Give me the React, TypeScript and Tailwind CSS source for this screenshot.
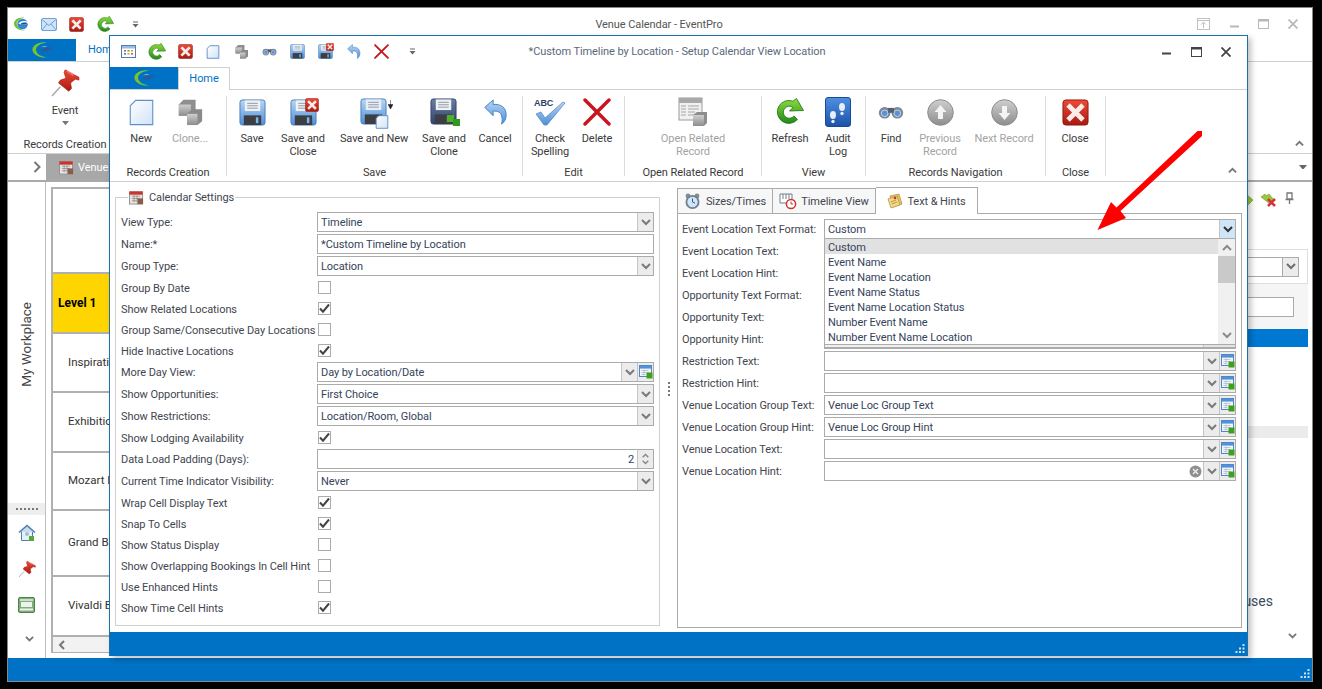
import React from "react";

const Defs = () => (
  <svg width="0" height="0" className="absolute">
    <defs>
      <linearGradient id="gRed" x1="0" y1="0" x2="0" y2="1"><stop offset="0" stopColor="#ee4a38" /><stop offset="1" stopColor="#a81a10" /></linearGradient>
      <linearGradient id="gBlue" x1="0" y1="0" x2="0" y2="1"><stop offset="0" stopColor="#b8d6f4" /><stop offset="1" stopColor="#4e8fd8" /></linearGradient>
      <linearGradient id="gDark" x1="0" y1="0" x2="0" y2="1"><stop offset="0" stopColor="#6c7ea0" /><stop offset="1" stopColor="#2f4470" /></linearGradient>
      <linearGradient id="gGreen" x1="0" y1="0" x2="0" y2="1"><stop offset="0" stopColor="#8fdc3c" /><stop offset="1" stopColor="#1f8a18" /></linearGradient>
      <linearGradient id="gDoc" x1="0" y1="0" x2="1" y2="1"><stop offset="0" stopColor="#ffffff" /><stop offset="1" stopColor="#cfe3f7" /></linearGradient>
      <linearGradient id="gGrey" x1="0" y1="0" x2="0" y2="1"><stop offset="0" stopColor="#cfcfcf" /><stop offset="1" stopColor="#8d8d8d" /></linearGradient>
      <linearGradient id="gBook" x1="0" y1="0" x2="0" y2="1"><stop offset="0" stopColor="#4f8fe0" /><stop offset="1" stopColor="#1b52a8" /></linearGradient>
    </defs>
  </svg>
);

const Logo = ({ w = 24 }: { w?: number }) => (
  <svg width={w} height={w * 0.78} viewBox="0 0 32 25">
    <path d="M22 2C11 0 1 6 2 13c1 7 11 11 20 10-7-1-14-4-15-10C6 8 13 3 22 2z" fill="#7cc22e" />
    <path d="M12 14c4-4 11-6 18-5-2 4-9 7-18 5z" fill="#2d5a9c" />
    <path d="M14 9c3-2 7-2 9-1-3 0-6 0-9 1z" fill="#e8f2fb" />
  </svg>
);
const SmallLogo = () => (
  <svg width="17" height="16" viewBox="0 0 32 30">
    <path d="M22 3C10 1 1 8 2 15c1 8 11 13 21 12-8-1-15-5-16-12C6 10 13 4 22 3z" fill="#6cc02a" />
    <circle cx="18" cy="15" r="10" fill="#1f7ad0" opacity="0.9" />
    <path d="M10 14c4-5 12-6 20-3-3 5-12 7-20 3z" fill="#ffffff" />
    <path d="M14 15c4-3 9-3 13-2-3 3-8 4-13 2z" fill="#1b4a94" />
  </svg>
);

const RedX = ({ s = 16 }: { s?: number }) => (
  <svg width={s} height={s} viewBox="0 0 28 28">
    <rect x="1" y="1" width="26" height="26" rx="3" fill="url(#gRed)" stroke="#8c1a12" />
    <path d="M8 8l12 12M20 8L8 20" stroke="#fbecea" strokeWidth="5" strokeLinecap="square" />
  </svg>
);
const Refresh = ({ s = 18 }: { s?: number }) => (
  <svg width={s} height={s} viewBox="0 0 28 28">
    <path d="M21.5 21.5A11.5 11.5 0 1 1 17 3.2L20.5 0.5 27.5 12.5 13.5 13 17 9.5A6 6 0 1 0 18 18z" fill="url(#gGreen)" stroke="#1d6f16" strokeWidth="0.8" strokeLinejoin="round" />
  </svg>
);
const Mail = () => (
  <svg width="16" height="13" viewBox="0 0 16 13">
    <rect x="0.5" y="0.5" width="15" height="12" rx="1" fill="#cfe4f8" stroke="#6fa1d6" />
    <path d="M1 1.5l7 6 7-6M1 12l5-6M15 12l-5-6" stroke="#6fa1d6" fill="none" />
  </svg>
);
const Doc = ({ s = 28 }: { s?: number }) => (
  <svg width={s} height={s} viewBox="0 0 28 30">
    <path d="M7.5 1.5H26.5V28.5H1.5V7.5z" fill="url(#gDoc)" stroke="#5f8fc8" strokeWidth={s < 20 ? 2 : 1.2} />
  </svg>
);
const Cubes = ({ s = 28 }: { s?: number }) => (
  <svg width={s} height={s} viewBox="0 0 28 30">
    <path d="M2 7l5-5h13v12l-5 5H2z" fill="#8f8f8f" />
    <path d="M2 7h13v12H2z" fill="url(#gGrey)" />
    <path d="M11 17l5-5h11v13l-5 4H11z" fill="#8a8a8a" />
    <path d="M11 17h11v12H11z" fill="url(#gGrey)" />
  </svg>
);
const Binoc = ({ s = 26 }: { s?: number }) => (
  <svg width={s} height={s * 0.6} viewBox="0 0 26 16">
    <circle cx="6.5" cy="9" r="6" fill="#7b8796" />
    <circle cx="19.5" cy="9" r="6" fill="#7b8796" />
    <circle cx="6.5" cy="9.5" r="3.4" fill="#5b92d6" stroke="#c4d6ee" />
    <circle cx="19.5" cy="9.5" r="3.4" fill="#5b92d6" stroke="#c4d6ee" />
    <rect x="10" y="4" width="6" height="5" fill="#56606c" />
  </svg>
);
const Floppy = ({ s = 28, dark = false, light = false }: { s?: number; dark?: boolean; light?: boolean }) => (
  <svg width={s} height={s} viewBox="0 0 28 28">
    <rect x="1" y="1" width="26" height="26" rx="2.5" fill={dark ? "url(#gDark)" : "url(#gBlue)"} stroke={dark ? "#2f4470" : "#4a7cb8"} />
    <rect x="6" y="1.5" width="16" height="11" fill={light ? "#e8eef6" : "#f0f1f3"} />
    <path d="M8.5 4.5h11M8.5 7h11M8.5 9.5h11" stroke="#8f98a3" />
    <rect x="5" y="17" width="18" height="10" fill="#3c3e44" />
    <rect x="17.5" y="19" width="2.6" height="6" fill="#7fb5e8" />
  </svg>
);
const Corner = ({ children, cls }: { children: React.ReactNode; cls: string }) => <span className={"absolute " + cls}>{children}</span>;
const FloppyX = ({ s = 28 }: { s?: number }) => (
  <span className="relative inline-block" style={{ width: s, height: s }}>
    <Floppy s={s} />
    <Corner cls="-right-[2px] -top-[1px] leading-none"><RedX s={Math.round(s * 0.5)} /></Corner>
  </span>
);
const Undo = ({ s = 26 }: { s?: number }) => (
  <svg width={s} height={s} viewBox="0 0 26 28">
    <path d="M2 9L11 1v5c8-1 14 3 14 11 0 5-2 8-5 10 1-3 1-6 0-9-1-4-4-5-9-5v5z" fill="url(#gBlue)" stroke="#3f7dc4" />
  </svg>
);
const BigX = ({ s = 28 }: { s?: number }) => (
  <svg width={s} height={s} viewBox="0 0 28 28">
    <path d="M2 2L26 26M26 2L2 26" stroke="#c8141c" strokeWidth="3.4" strokeLinecap="round" />
  </svg>
);
const Cubes3 = () => (
  <svg width="14" height="13" viewBox="0 0 14 13">
    <rect x="0" y="1" width="7" height="7" fill="#4fb02a" />
    <rect x="6" y="5" width="7" height="7" fill="#2f9a1c" />
  </svg>
);
const CheckAbc = () => (
  <svg width="32" height="32" viewBox="0 0 32 32">
    <text x="0" y="9.5" fontSize="9" fontWeight="700" fill="#2d3f66" fontFamily="'Liberation Sans',sans-serif">ABC</text>
    <path d="M2 18l5-2 4 6L29 6l2 1-18 22h-3z" fill="url(#gBlue)" stroke="#5d8dc4" strokeWidth="0.8" />
  </svg>
);
const RecordOpen = () => (
  <svg width="30" height="30" viewBox="0 0 30 30">
    <rect x="1" y="1" width="23" height="22" fill="#f1f1f1" stroke="#9a9a9a" />
    <rect x="1" y="1" width="23" height="5" fill="#a9a9a9" />
    <path d="M3 9h5M3 12h5M3 15h5M3 18h5M10 9h11M10 12h11M10 15h7M10 18h7" stroke="#a5a5a5" />
    <path d="M15 18l4-3h10v11l-3 3H15z" fill="#8d8d8d" />
    <rect x="15" y="18" width="11" height="11" fill="url(#gGrey)" />
  </svg>
);
const Audit = () => (
  <svg width="26" height="30" viewBox="0 0 26 30">
    <rect x="0.5" y="0.5" width="25" height="29" rx="2.5" fill="url(#gBook)" stroke="#174a98" />
    <ellipse cx="8" cy="18" rx="3" ry="4" fill="#e6eef8" />
    <circle cx="8" cy="24.5" r="1.7" fill="#e6eef8" />
    <ellipse cx="17" cy="10" rx="3" ry="4" fill="#e6eef8" />
    <circle cx="17" cy="16.5" r="1.7" fill="#e6eef8" />
  </svg>
);
const CircleArrow = ({ up = false }: { up?: boolean }) => (
  <svg width="27" height="27" viewBox="0 0 27 27">
    <circle cx="13.5" cy="13.5" r="12.8" fill="url(#gGrey)" stroke="#8c8c8c" />
    <path d={up ? "M13.5 6l6 7h-3.5v7h-5v-7H7.5z" : "M13.5 21l6-7h-3.5V7h-5v7H7.5z"} fill="#f4f4f4" />
  </svg>
);
const Pin = ({ s = 32 }: { s?: number }) => (
  <svg width={s} height={s} viewBox="0 0 32 32">
    <path d="M11 20L2 30" stroke="#a8a8a8" strokeWidth="1.6" />
    <path d="M16 2l-1 3 2 6-6 2-2 3 11 9 3-3-1-6 5-4 4 1 0-3z" fill="url(#gRed)" stroke="#a5120e" strokeWidth="0.6" />
    <path d="M18 3l7 5" stroke="#f47c6c" strokeWidth="1.6" />
  </svg>
);
const Calendar = ({ s = 16 }: { s?: number }) => (
  <svg width={s} height={s} viewBox="0 0 16 16">
    <rect x="0.5" y="2" width="14" height="13" fill="#e8e6e2" stroke="#8f8f8f" />
    <rect x="0.5" y="1.5" width="14" height="3.5" fill="#c9352c" />
    <path d="M3 6.5h9M3 9h9M3 11.5h5M5.5 6v7M8.5 6v7" stroke="#8a8a8a" strokeWidth="0.8" />
    <rect x="9" y="9" width="6" height="6" fill="#8c5a48" />
  </svg>
);
const TableGrid = () => (
  <svg width="15" height="13" viewBox="0 0 15 13">
    <rect x="0.5" y="0.5" width="14" height="12" fill="#fff" stroke="#4f7fb8" />
    <rect x="1" y="1" width="13" height="2.5" fill="#9cbde0" />
    <rect x="3" y="5" width="2" height="1.6" fill="#d9534f" /><rect x="6.5" y="5" width="2" height="1.6" fill="#4caf50" /><rect x="10" y="5" width="2" height="1.6" fill="#e0a030" />
    <rect x="3" y="8" width="2" height="1.6" fill="#4f7fb8" /><rect x="6.5" y="8" width="2" height="1.6" fill="#e0a030" /><rect x="10" y="8" width="2" height="1.6" fill="#d9534f" />
  </svg>
);
const Clock = () => (
  <svg width="17" height="17" viewBox="0 0 17 17">
    <circle cx="4" cy="3" r="2.4" fill="#8a8a8a" /><circle cx="13" cy="3" r="2.4" fill="#8a8a8a" />
    <circle cx="8.5" cy="9" r="7" fill="#6f7f8f" />
    <circle cx="8.5" cy="9" r="5.2" fill="#cfe6fa" />
    <path d="M8.5 5.5V9l2.5 1.2" stroke="#3a5a80" fill="none" />
  </svg>
);
const TimelineIc = () => (
  <svg width="18" height="17" viewBox="0 0 18 17">
    <path d="M1 1h12v9H1z" fill="#fff" stroke="#6f7f8f" />
    <path d="M4 1v5M7 1v5M10 1v5" stroke="#6f7f8f" />
    <circle cx="12" cy="11" r="4.6" fill="#fff" stroke="#c8352c" strokeWidth="1.5" />
    <path d="M12 8.5V11h2" stroke="#c8352c" fill="none" />
  </svg>
);
const Note = () => (
  <svg width="16" height="16" viewBox="0 0 16 16">
    <path d="M3 3l9-2 3 10-9 3z" fill="#e8c468" stroke="#b08a35" strokeWidth="0.7" />
    <path d="M1 6l9-3 3 9-9 3z" fill="#f0d88a" stroke="#b08a35" strokeWidth="0.7" />
    <circle cx="8" cy="5" r="1.3" fill="#c8352c" />
    <path d="M4 9l5-2M5 11l5-2" stroke="#a67c2a" strokeWidth="0.7" />
  </svg>
);
const Lookup = () => (
  <svg width="14" height="14" viewBox="0 0 14 14">
    <rect x="0.5" y="0.5" width="12" height="11" fill="#f2f6fb" stroke="#4f88c8" />
    <rect x="1" y="1" width="11" height="2.6" fill="#4f93dc" />
    <path d="M2.5 5.5h7M2.5 7.5h7M2.5 9.5h4M5 4.5v6" stroke="#a9b6c4" strokeWidth="0.7" />
    <rect x="7.5" y="7.5" width="6" height="6" fill="#3fa01e" />
  </svg>
);
const Chev = ({ c = "#6e6e6e", up = false, w = 10 }: { c?: string; up?: boolean; w?: number }) => (
  <svg width={w} height={w * 0.7} viewBox="0 0 10 7">
    <path d={up ? "M1 6l4-4 4 4" : "M1 1l4 4 4-4"} stroke={c} strokeWidth="2" fill="none" />
  </svg>
);
const Tri = ({ c = "#777", w = 7 }: { c?: string; w?: number }) => (
  <svg width={w} height={w * 0.6} viewBox="0 0 10 6"><path d="M0 0h10L5 6z" fill={c} /></svg>
);
const QatMore = () => (
  <svg width="7" height="7" viewBox="0 0 7 7"><path d="M1 1h5" stroke="#666" /><path d="M0.5 3h6L3.5 6.5z" fill="#666" /></svg>
);
const Check = () => (
  <svg width="13" height="13" viewBox="0 0 13 13">
    <path d="M2 6.5l3 3.2L11 2.5" stroke="#444" strokeWidth="2" fill="none" />
  </svg>
);
const Win = ({ light = false }: { light?: boolean }) => {
  const c = light ? "#b9b9b9" : "#444";
  return (
    <>
      <svg width="9" height="9" viewBox="0 0 9 9"><path d="M0 6.5h9" stroke={c} strokeWidth="2" /></svg>
      <svg width="11" height="10" viewBox="0 0 11 10"><rect x="0.5" y="0.5" width="10" height="9" fill="none" stroke={c} /><path d="M0 1.5h11" stroke={c} strokeWidth="2" /></svg>
      <svg width="10" height="10" viewBox="0 0 10 10"><path d="M0.5 0.5l9 9M9.5 0.5l-9 9" stroke={c} strokeWidth="1.8" /></svg>
    </>
  );
};

const Btn = ({ w, icon, lines, dim = false }: { w: string; icon: React.ReactNode; lines: string[]; dim?: boolean }) => (
  <div className={"flex flex-col items-center shrink-0 " + w}>
    <div className="flex h-[32px] items-center justify-center">{icon}</div>
    <div className={"mt-[4px] text-center leading-[13px] whitespace-nowrap " + (dim ? "text-[#a3a3a3]" : "text-[#3a3a3a]")}>
      {lines.map((l) => <div key={l}>{l}</div>)}
    </div>
  </div>
);
const Group = ({ w, label, children }: { w: string; label: string; children: React.ReactNode }) => (
  <div className={"flex flex-col shrink-0 pt-[6px] " + w}>
    <div className="flex flex-1">{children}</div>
    <div className="h-[16px] text-center leading-[16px] text-[#3a3a3a] whitespace-nowrap">{label}</div>
  </div>
);
const Sep = () => <div className="h-[80px] w-px shrink-0 self-center bg-[#dcdcdc]" />;

const Field = ({ value = "", chev = true, lookup = false, right = false, clear = false, active = false }: { value?: string; chev?: boolean; lookup?: boolean; right?: boolean; clear?: boolean; active?: boolean }) => (
  <div className="flex h-[20px] w-full border border-[#ababab] bg-white text-[#34435a]">
    <div className={"flex-1 px-[3px] leading-[19px] whitespace-nowrap overflow-hidden " + (right ? "text-right" : "")}>{value}</div>
    {clear && (
      <div className="flex w-[16px] items-center justify-center">
        <svg width="13" height="13" viewBox="0 0 13 13"><circle cx="6.5" cy="6.5" r="6" fill="#8f8f8f" /><path d="M4 4l5 5M9 4l-5 5" stroke="#eee" strokeWidth="1.4" /></svg>
      </div>
    )}
    {chev && (
      <div className={"flex w-[16px] items-center justify-center border-l border-[#c4c4c4] " + (active ? "bg-[#cfe5f8]" : "bg-[#ececec]")}>
        <Chev c={active ? "#333" : "#7a7a7a"} />
      </div>
    )}
    {lookup && (
      <div className="flex w-[16px] items-center justify-center border-l border-[#c4c4c4] bg-[#ececec]"><Lookup /></div>
    )}
  </div>
);

const LRow = ({ label, children }: { label: string; children: React.ReactNode }) => (
  <div className="flex h-[22px] items-center">
    <div className="w-[196px] shrink-0 pt-[1px] whitespace-nowrap text-[#3f4650]">{label}</div>
    <div className="w-[337px]">{children}</div>
  </div>
);
const CRow = ({ label, on = false }: { label: string; on?: boolean }) => (
  <div className="flex h-[21px] items-center">
    <div className="w-[196px] shrink-0 pt-[1px] whitespace-nowrap text-[#3f4650]">{label}</div>
    <div className="ml-[1px] flex h-[13px] w-[13px] items-center justify-center border border-[#ababab] bg-white"><span className="flex h-[13px] w-[13px] shrink-0 items-center justify-center">{on && <Check />}</span></div>
  </div>
);
const RRow = ({ label, children }: { label: string; children: React.ReactNode }) => (
  <div className="flex h-[22px] items-center">
    <div className="w-[142px] shrink-0 pt-[1px] whitespace-nowrap text-[#3f4650]">{label}</div>
    <div className="w-[412px]">{children}</div>
  </div>
);

const formats = ["Custom", "Event Name", "Event Name Location", "Event Name Status", "Event Name Location Status", "Number Event Name", "Number Event Name Location"];

const Dropdown = () => (
  <div className="absolute left-0 top-[19px] z-10 flex h-[110px] w-[412px] flex-col border border-[#ababab] bg-white text-[#34435a]">
    <div className="flex h-[105px]">
      <div className="flex-1">
        {formats.map((f, i) => (
          <div key={f} className={"h-[15px] pl-[3px] leading-[17px] " + (i === 0 ? "bg-[#e1e1e1]" : "")}>{f}</div>
        ))}
      </div>
      <div className="flex w-[17px] flex-col items-center bg-[#f0f0f0]">
        <div className="flex h-[17px] items-center"><Chev up c="#8a8a8a" /></div>
        <div className="h-[27px] w-full bg-[#c9c9c9]" />
        <div className="flex flex-1 items-end pb-[5px]"><Chev c="#8a8a8a" /></div>
      </div>
    </div>
    <div className="flex flex-1 justify-end border-t border-[#ababab] bg-[#f0f0f0]">
      <div className="w-[32px] border-l border-[#c4c4c4] bg-[#e4e4e4]" />
    </div>
  </div>
);

const Grip = () => (
  <svg width="10" height="10" viewBox="0 0 10 10" fill="#cfe0f2">
    <rect x="7.5" y="0" width="2" height="2" /><rect x="4" y="3.5" width="2" height="2" /><rect x="7.5" y="3.5" width="2" height="2" />
    <rect x="0.5" y="7" width="2" height="2" /><rect x="4" y="7" width="2" height="2" /><rect x="7.5" y="7" width="2" height="2" />
  </svg>
);

const TableRow = ({ h, children, yellow = false }: { h: string; children?: React.ReactNode; yellow?: boolean }) => (
  <div className={"flex items-center border-b-2 border-[#b0b0b0] whitespace-nowrap tracking-normal text-[#333] " + h + (yellow ? " bg-[#ffd500] pl-[5px] text-[12px] font-bold text-black" : " pl-[15px] text-[11.5px]")}>{children}</div>
);

const Background = () => (
  <div className="flex h-[675px] w-[1306px] flex-col overflow-hidden border border-[#8a8a8a] bg-white">
    <div className="flex h-[31px] items-center pl-[5px] pt-[1px]">
      <div className="flex w-[26px] justify-start"><SmallLogo /></div>
      <div className="flex w-[30px] justify-start pl-[2px]"><Mail /></div>
      <div className="flex w-[28px]"><RedX s={15} /></div>
      <div className="flex w-[35px]"><Refresh s={17} /></div>
      <QatMore />
      <div className="ml-[450px] w-[140px] text-center whitespace-nowrap text-[#555]">Venue Calendar - EventPro</div>
      <div className="ml-[468px] flex w-[14px] items-center">
        <svg width="13" height="12" viewBox="0 0 13 12"><rect x="0.5" y="0.5" width="12" height="11" fill="none" stroke="#c0c0c0" /><path d="M0 2.5h13M6.5 10V4.5M4 6.5l2.5-2.5L9 6.5" stroke="#c0c0c0" fill="none" /></svg>
      </div>
      <div className="ml-[19px] flex w-[69px] items-center justify-between pr-[1px]"><Win light /></div>
    </div>
    <div className="flex h-[23px] border-b border-[#d0d0d0]">
      <div className="flex w-[68px] items-center justify-center bg-[#0072c6]"><Logo w={23} /></div>
      <div className="border-r border-[#d0d0d0] pl-[12px] pr-[8px] leading-[22px] text-[#0072c6]">Home</div>
    </div>
    <div className="flex h-[92px] border-b border-[#d0d0d0]">
      <div className="flex w-[114px] flex-col items-center pt-[6px]">
        <Pin />
        <div className="mt-[6px] leading-[14px] text-[#3a3a3a]">Event</div>
        <div className="mt-[3px]"><Tri /></div>
        <div className="mt-[12px] whitespace-nowrap leading-[16px] text-[#3a3a3a]">Records Creation</div>
      </div>
      <div className="ml-auto mr-[8px] self-end pb-[7px]"><Chev up c="#777" w={9} /></div>
    </div>
    <div className="flex h-[28px] border-b-2 border-[#a9a9a9]">
      <div className="flex w-[38px] items-center justify-end pr-[5px]">
        <svg width="8" height="12" viewBox="0 0 8 12"><path d="M1.5 1l5 5-5 5" stroke="#777" strokeWidth="2" fill="none" /></svg>
      </div>
      <div className="flex w-[110px] items-center gap-[4px] bg-[#a8a8a8] pl-[13px] text-white"><Calendar s={15} />Venue</div>
      <div className="ml-auto mr-[5px] self-center"><Tri c="#666" w={8} /></div>
    </div>
    <div className="flex flex-1">
      <div className="flex w-[38px] flex-col border-r border-[#c0c0c0]">
        <div className="flex flex-1 items-center justify-center pt-[3px]">
          <span className="rotate-180 text-[13.5px] tracking-normal whitespace-nowrap text-[#444] [writing-mode:vertical-rl]">My Workplace</span>
        </div>
        <div className="flex h-[12px] items-center justify-center bg-[#eeeeee] text-[#666]">
          <span className="h-[1px] w-[22px] border-t-2 border-dotted border-[#777]" />
        </div>
        <div className="flex h-[36px] items-center justify-center">
          <svg width="18" height="18" viewBox="0 0 18 18"><path d="M1 8.5L9 1.5l8 7" stroke="#4f7fb0" strokeWidth="1.6" fill="#c9dcef" /><path d="M3.5 8v8.5h11V8" fill="#e8f0f8" stroke="#4f7fb0" /><circle cx="9" cy="10" r="2" fill="#9cc0e2" /><rect x="11" y="12" width="5" height="5" fill="#5aa83a" /></svg>
        </div>
        <div className="flex h-[36px] items-center justify-center"><Pin s={18} /></div>
        <div className="flex h-[36px] items-center justify-center">
          <svg width="17" height="16" viewBox="0 0 17 16"><rect x="0.5" y="0.5" width="16" height="15" rx="1.5" fill="#7fae7a" stroke="#4f7f4a" /><rect x="3" y="5" width="11" height="5" fill="#eef3ec" /><path d="M2 12.5h13" stroke="#eef3ec" strokeWidth="2" /><rect x="2" y="2" width="13" height="2" fill="#cfe0cc" /></svg>
        </div>
        <div className="flex h-[35px] items-center justify-center pb-[3px] pl-[5px]"><Chev w={9} c="#777" /></div>
      </div>
      <div className="ml-[5px] mt-[5px] mb-[5px] flex w-[650px] flex-col border-l-2 border-t-2 border-[#b0b0b0] border-b">
        <TableRow h="h-[85px]" />
        <TableRow h="h-[60px]" yellow>Level 1</TableRow>
        <TableRow h="h-[59px]">Inspirati</TableRow>
        <TableRow h="h-[60px]">Exhibitio</TableRow>
        <TableRow h="h-[58px]">Mozart B</TableRow>
        <TableRow h="h-[66px]">Grand Ba</TableRow>
        <TableRow h="h-[60px]">Vivaldi B</TableRow>
        <div className="flex flex-1 items-center bg-[#f2f2f2] pl-[5px]">
          <svg width="7" height="10" viewBox="0 0 7 10"><path d="M6 1L2 5l4 4" stroke="#777" strokeWidth="2" fill="none" /></svg>
        </div>
      </div>
      <div className="mr-[4px] flex flex-1 flex-col items-stretch">
        <div className="flex h-[67px] items-start justify-end gap-[8px] pt-[10px] pr-[14px]">
          <svg width="12" height="14" viewBox="0 0 12 14"><path d="M0 6l5-4 7 6-5 5z" fill="#9ac83c" stroke="#6f9a2a" strokeWidth="0.6" /></svg>
          <svg width="16" height="16" viewBox="0 0 16 16"><path d="M0 5l4-3 1 2 3-2 5 6-4 4z" fill="#9ac83c" stroke="#6f9a2a" strokeWidth="0.6" /><path d="M7 7l7 7M14 7l-7 7" stroke="#d8333a" strokeWidth="2.6" /></svg>
          <svg width="9" height="12" viewBox="0 0 9 12"><path d="M2 1h5v6H2zM0.5 7.5h8M4.5 7.5V12" stroke="#777" strokeWidth="1.3" fill="none" /></svg>
        </div>
        <div className="flex h-[35px] items-center justify-end border border-[#dedede] pr-[8px]">
          <div className="flex h-[20px] w-[300px] justify-end border border-[#ababab] bg-white">
            <div className="flex w-[16px] items-center justify-center border-l border-[#ababab] bg-[#ececec]"><Chev /></div>
          </div>
        </div>
        <div className="flex h-[45px] items-center justify-end bg-[#f5f5f5] pr-[14px]">
          <div className="h-[20px] w-[300px] border border-[#ababab] bg-white" />
        </div>
        <div className="h-[18px] bg-[#0078d2]" />
        <div className="mt-[79px] h-[12px] bg-[#ebebeb]" />
        <div className="mt-[154px] pr-[35px] text-right text-[14px] leading-[18px] tracking-normal text-[#3a4a60]">uses</div>
        <div className="mt-[23px] flex justify-end pr-[11px]"><Chev w={9} c="#777" /></div>
      </div>
    </div>
    <div className="flex h-[23px] items-end justify-end bg-[#0072c6] p-[2px]"><Grip /></div>
  </div>
);

export default function App() {
  return (
    <div className="relative h-[689px] w-[1322px] overflow-hidden bg-black p-[7px] font-['Roboto',sans-serif] text-[11px] tracking-[-0.08px] leading-none">
      <Defs />
      <Background />

      <div className="absolute left-[109px] top-[35px] z-10 flex h-[621px] w-[1139px] flex-col border border-[#1f6fa8] border-b-0 bg-white shadow-[3px_3px_6px_rgba(0,0,0,0.25)]">
        <div className="flex h-[31px] items-center pl-[4px]">
          <div className="flex w-[28px] justify-center"><TableGrid /></div>
          <div className="flex w-[29px] justify-center"><Refresh s={18} /></div>
          <div className="flex w-[28px] justify-center"><RedX s={15} /></div>
          <div className="flex w-[28px] justify-center"><Doc s={14} /></div>
          <div className="flex w-[29px] justify-center"><Cubes s={15} /></div>
          <div className="flex w-[27px] justify-center"><Binoc s={15} /></div>
          <div className="flex w-[28px] justify-center"><Floppy s={15} /></div>
          <div className="flex w-[28px] justify-center"><span className="relative inline-block h-[15px] w-[15px]"><Floppy s={15} /><Corner cls="-right-[1px] -top-[1px] leading-none"><RedX s={8} /></Corner></span></div>
          <div className="flex w-[28px] justify-center"><Undo s={15} /></div>
          <div className="flex w-[28px] justify-center"><BigX s={15} /></div>
          <div className="flex w-[34px] justify-center"><QatMore /></div>
          <div className="ml-[98px] w-[300px] text-center whitespace-nowrap text-[#59697d]">*Custom Timeline by Location - Setup Calendar View Location</div>
          <div className="ml-[335px] flex w-[69px] items-center justify-between"><Win /></div>
        </div>
        <div className="flex h-[23px] border-b border-[#d0d0d0]">
          <div className="flex w-[68px] items-center justify-center bg-[#0072c6]"><Logo w={23} /></div>
          <div className="mb-[-1px] w-[52px] border border-b-0 border-[#d0d0d0] bg-white text-center leading-[22px] text-[#0072c6]">Home</div>
        </div>

        <div className="flex h-[92px] border-b border-[#d0d0d0]">
          <Group w="w-[116px]" label="Records Creation">
            <div className="w-[12px]" />
            <Btn w="w-[38px]" icon={<Doc s={27} />} lines={["New"]} />
            <div className="w-[11px]" />
            <Btn w="w-[38px]" dim icon={<Cubes s={28} />} lines={["Clone..."]} />
          </Group>
          <Sep />
          <Group w="w-[295px]" label="Save">
            <Btn w="w-[50px]" icon={<Floppy s={27} />} lines={["Save"]} />
            <Btn w="w-[52px]" icon={<FloppyX s={27} />} lines={["Save and", "Close"]} />
            <Btn w="w-[90px]" icon={
              <span className="relative inline-block h-[28px] w-[28px]">
                <Floppy s={27} light />
                <Corner cls="-right-[1px] bottom-[-3px] leading-none"><Doc s={14} /></Corner>
                <Corner cls="-right-[5px] top-[2px] leading-none"><svg width="5" height="9" viewBox="0 0 5 9"><path d="M2.5 0v5M0 4.5h5L2.5 9z" fill="#222" stroke="#222" strokeWidth="0.5" /></svg></Corner>
              </span>} lines={["Save and New"]} />
            <Btn w="w-[50px]" icon={
              <span className="relative inline-block h-[28px] w-[28px]">
                <Floppy s={27} dark />
                <Corner cls="-right-[3px] bottom-[-1px] leading-none"><Cubes3 /></Corner>
              </span>} lines={["Save and", "Clone"]} />
            <Btn w="w-[52px]" icon={<Undo s={26} />} lines={["Cancel"]} />
          </Group>
          <Sep />
          <Group w="w-[101px]" label="Edit">
            <Btn w="w-[54px]" icon={<CheckAbc />} lines={["Check", "Spelling"]} />
            <Btn w="w-[40px]" icon={<BigX s={28} />} lines={["Delete"]} />
          </Group>
          <Sep />
          <Group w="w-[136px]" label="Open Related Record">
            <Btn w="w-[136px]" dim icon={<RecordOpen />} lines={["Open Related", "Record"]} />
          </Group>
          <Sep />
          <Group w="w-[103px]" label="View">
            <Btn w="w-[56px]" icon={<Refresh s={28} />} lines={["Refresh"]} />
            <Btn w="w-[40px]" icon={<Audit />} lines={["Audit", "Log"]} />
          </Group>
          <Sep />
          <Group w="w-[179px]" label="Records Navigation">
            <Btn w="w-[50px]" icon={<Binoc s={26} />} lines={["Find"]} />
            <Btn w="w-[48px]" dim icon={<CircleArrow up />} lines={["Previous", "Record"]} />
            <Btn w="w-[80px]" dim icon={<CircleArrow />} lines={["Next Record"]} />
          </Group>
          <Sep />
          <Group w="w-[59px]" label="Close">
            <Btn w="w-[58px]" icon={<RedX s={27} />} lines={["Close"]} />
          </Group>
          <Sep />
          <div className="ml-auto mr-[10px] self-end pb-[8px]"><Chev up c="#777" w={9} /></div>
        </div>

        <div className="flex flex-1 pl-[5px]">
          <fieldset className="mt-[8px] mb-[6px] w-[545px] border border-[#cfcfcf] px-[5px] pt-[7px]">
            <legend className="ml-[7px] flex h-[14px] items-center gap-[5px] px-[1px] text-[#3f4650]"><Calendar s={15} />Calendar Settings</legend>
            <LRow label="View Type:"><Field value="Timeline" /></LRow>
            <LRow label="Name:*"><Field value="*Custom Timeline by Location" chev={false} /></LRow>
            <LRow label="Group Type:"><Field value="Location" /></LRow>
            <CRow label="Group By Date" />
            <CRow label="Show Related Locations" on />
            <CRow label="Group Same/Consecutive Day Locations" />
            <CRow label="Hide Inactive Locations" on />
            <LRow label="More Day View:"><Field value="Day by Location/Date" lookup /></LRow>
            <LRow label="Show Opportunities:"><Field value="First Choice" /></LRow>
            <LRow label="Show Restrictions:"><Field value="Location/Room, Global" /></LRow>
            <CRow label="Show Lodging Availability" on />
            <LRow label="Data Load Padding (Days):">
              <div className="flex h-[20px] border border-[#ababab] bg-white text-[#34435a]">
                <div className="flex-1 pr-[3px] text-right leading-[19px]">2</div>
                <div className="flex w-[16px] flex-col items-center justify-center gap-[2px] border-l border-[#c4c4c4] bg-[#ececec]"><Chev up w={7} c="#888" /><Chev w={7} c="#888" /></div>
              </div>
            </LRow>
            <LRow label="Current Time Indicator Visibility:"><Field value="Never" /></LRow>
            <CRow label="Wrap Cell Display Text" on />
            <CRow label="Snap To Cells" on />
            <CRow label="Show Status Display" />
            <CRow label="Show Overlapping Bookings In Cell Hint" />
            <CRow label="Use Enhanced Hints" />
            <CRow label="Show Time Cell Hints" on />
          </fieldset>

          <div className="flex w-[17px] items-center justify-center pb-[36px] pl-[0px]">
            <span className="flex flex-col gap-[2px]">
              <i className="block h-[2px] w-[2px] bg-[#777]" /><i className="block h-[2px] w-[2px] bg-[#777]" /><i className="block h-[2px] w-[2px] bg-[#777]" /><i className="block h-[2px] w-[2px] bg-[#777]" />
            </span>
          </div>

          <div className="flex w-[565px] flex-col pt-[5px] pb-[4px]">
            <div className="flex h-[26px] items-end pl-[0px]">
              <div className="flex h-[25px] w-[96px] items-center justify-center gap-[5px] border border-b-0 border-[#ababab] bg-[#f7f7f7] text-[#3f4650]"><Clock />Sizes/Times</div>
              <div className="flex h-[25px] w-[103px] items-center justify-center gap-[4px] border border-b-0 border-l-0 border-[#ababab] bg-[#f7f7f7] text-[#3f4650]"><TimelineIc />Timeline View</div>
              <div className="relative z-[1] mb-[-1px] flex h-[27px] w-[102px] items-center justify-center gap-[4px] border border-b-0 border-l-0 border-[#ababab] bg-white text-[#3f4650]"><Note />Text &amp; Hints</div>
            </div>
            <div className="flex-1 border border-[#ababab] pl-[4px] pt-[4px]">
              <RRow label="Event Location Text Format:">
                <div className="relative"><Field value="Custom" active /><Dropdown /></div>
              </RRow>
              <RRow label="Event Location Text:"><Field chev lookup /></RRow>
              <RRow label="Event Location Hint:"><Field chev lookup /></RRow>
              <RRow label="Opportunity Text Format:"><Field chev /></RRow>
              <RRow label="Opportunity Text:"><Field chev lookup /></RRow>
              <RRow label="Opportunity Hint:"><Field chev lookup /></RRow>
              <RRow label="Restriction Text:"><Field chev lookup /></RRow>
              <RRow label="Restriction Hint:"><Field chev lookup /></RRow>
              <RRow label="Venue Location Group Text:"><Field value="Venue Loc Group Text" lookup /></RRow>
              <RRow label="Venue Location Group Hint:"><Field value="Venue Loc Group Hint" lookup /></RRow>
              <RRow label="Venue Location Text:"><Field lookup /></RRow>
              <RRow label="Venue Location Hint:"><Field lookup clear /></RRow>
            </div>
          </div>
        </div>

        <div className="flex h-[24px] items-end justify-end bg-[#0072c6] p-[2px]"><Grip /></div>
      </div>

      <svg className="absolute left-[1090px] top-[125px] z-20" width="120" height="110" viewBox="1090 125 120 110">
        <path d="M1197.5 131L1202 131L1202 136L1120.5 211L1126 218L1097.5 230L1111 202L1116.5 207.5Z" fill="#ff0000" />
      </svg>
    </div>
  );
}
